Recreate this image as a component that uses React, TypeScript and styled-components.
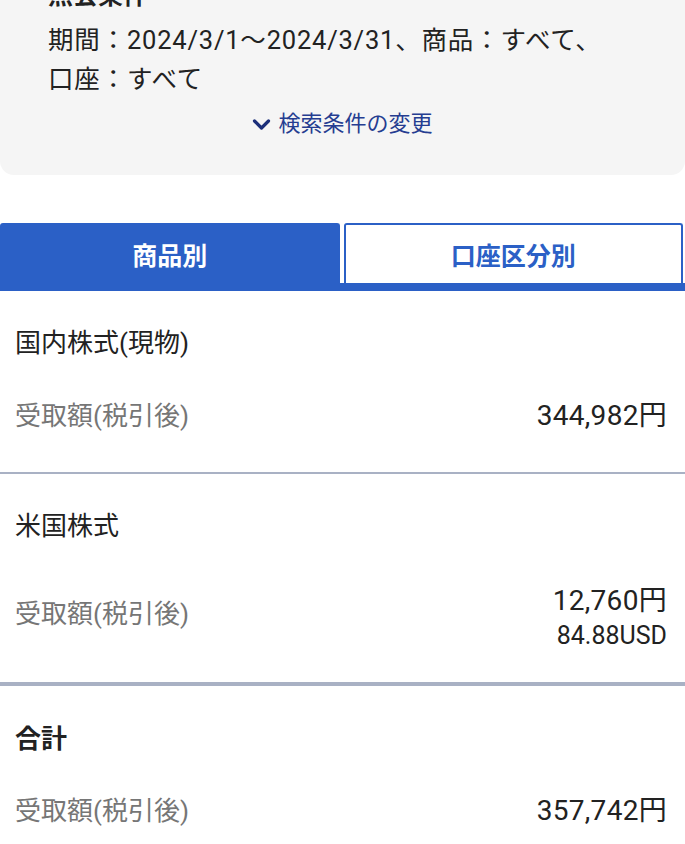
import React, { useState } from 'react';
import styled, { createGlobalStyle } from 'styled-components';

const GlobalStyle = createGlobalStyle`
  body {
    margin: 0;
    background: #fff;
    font-family: Roboto, "Noto Sans CJK JP", sans-serif;
    color: #222;
    overflow: hidden;
  }
`;

const Page = styled.div`
  width: 685px;
`;

const ConditionCard = styled.section`
  margin-top: -24px;
  background-color: #f5f5f5;
  border-radius: 0 0 14px 14px;
  padding: 0 48px 36px;
`;

const ConditionTitle = styled.h2`
  margin: 0 0 5px;
  font-size: 25px;
  line-height: 40px;
  font-weight: bold;
`;

const ConditionText = styled.p`
  margin: 0;
  font-size: 25.5px;
  line-height: 39px;
  letter-spacing: 0.8px;
  color: #222;
`;

const ChangeLink = styled.a`
  margin-top: 10px;
  display: flex;
  align-items: center;
  justify-content: center;
  gap: 7px;
  font-size: 22px;
  line-height: 30px;
  color: #253d91;
  text-decoration: none;
  cursor: pointer;
`;

const Tabs = styled.div`
  margin-top: 48px;
  display: grid;
  grid-template-columns: 1fr 1fr;
  gap: 4px;
  padding-right: 2px;
  border-bottom: 8px solid #2b60c6;
`;

const Tab = styled.button<{ $active: boolean }>`
  height: 60px;
  display: flex;
  align-items: center;
  justify-content: center;
  font-family: inherit;
  font-size: 25px;
  font-weight: bold;
  border-radius: 3px 3px 0 0;
  cursor: pointer;
  background-color: ${(p) => (p.$active ? '#2b60c6' : '#fff')};
  color: ${(p) => (p.$active ? '#fff' : '#2b60c6')};
  border: 2px solid #2b60c6;
  border-bottom: none;
`;

const Section = styled.section<{ $divider: number; $top: number; $bottom: number }>`
  padding: ${(p) => p.$top}px 18px ${(p) => p.$bottom}px 15px;
  border-bottom: ${(p) => p.$divider}px solid #a9b1c4;
`;

const SectionTitle = styled.h3<{ $bold?: boolean }>`
  margin: 0;
  font-size: 26px;
  line-height: 40px;
  font-weight: ${(p) => (p.$bold ? 'bold' : 'normal')};
  color: #222;
`;

const DetailRow = styled.div<{ $gap: number }>`
  margin-top: ${(p) => p.$gap}px;
  display: flex;
  align-items: center;
  justify-content: space-between;
`;

const DetailLabel = styled.span`
  font-size: 26px;
  line-height: 40px;
  color: #767676;
`;

const ValueBlock = styled.div<{ $shift: number }>`
  margin-top: ${(p) => p.$shift}px;
  display: flex;
  flex-direction: column;
  align-items: flex-end;
`;

const MainValue = styled.span`
  font-size: 28px;
  line-height: 36px;
  letter-spacing: 0.3px;
  color: #222;
`;

const SubValue = styled.span`
  font-size: 25px;
  line-height: 34px;
  color: #222;
`;

const Chevron = () => (
  <svg width="19" height="13" viewBox="0 0 19 13" fill="none">
    <path d="M2.5 3 L9.5 10 L16.5 3" stroke="#1c2f7a" strokeWidth="3.2" strokeLinecap="round" strokeLinejoin="round" />
  </svg>
);

interface Item {
  name: string;
  yen: string;
  usd?: string;
}

const items: Item[] = [
  { name: '国内株式(現物)', yen: '344,982円' },
  { name: '米国株式', yen: '12,760円', usd: '84.88USD' },
];

export default function App() {
  const [tab, setTab] = useState(0);

  return (
    <Page>
      <GlobalStyle />
      <ConditionCard>
        <ConditionTitle>照会条件</ConditionTitle>
        <ConditionText>期間：2024/3/1〜2024/3/31、商品：すべて、</ConditionText>
        <ConditionText>口座：すべて</ConditionText>
        <ChangeLink>
          <Chevron />
          検索条件の変更
        </ChangeLink>
      </ConditionCard>

      <Tabs>
        <Tab $active={tab === 0} onClick={() => setTab(0)}>商品別</Tab>
        <Tab $active={tab === 1} onClick={() => setTab(1)}>口座区分別</Tab>
      </Tabs>

      {items.map((item, index) => (
        <Section
          key={index}
          $divider={index === items.length - 1 ? 4 : 2}
          $top={32}
          $bottom={item.usd ? 29 : 36}
        >
          <SectionTitle>{item.name}</SectionTitle>
          <DetailRow $gap={item.usd ? 29 : 33}>
            <DetailLabel>受取額(税引後)</DetailLabel>
            <ValueBlock $shift={item.usd ? 8 : 0}>
              <MainValue>{item.yen}</MainValue>
              {item.usd && <SubValue>{item.usd}</SubValue>}
            </ValueBlock>
          </DetailRow>
        </Section>
      ))}

      <Section $divider={0} $top={33} $bottom={35}>
        <SectionTitle $bold>合計</SectionTitle>
        <DetailRow $gap={32}>
          <DetailLabel>受取額(税引後)</DetailLabel>
          <ValueBlock $shift={0}>
            <MainValue>357,742円</MainValue>
          </ValueBlock>
        </DetailRow>
      </Section>
    </Page>
  );
}
